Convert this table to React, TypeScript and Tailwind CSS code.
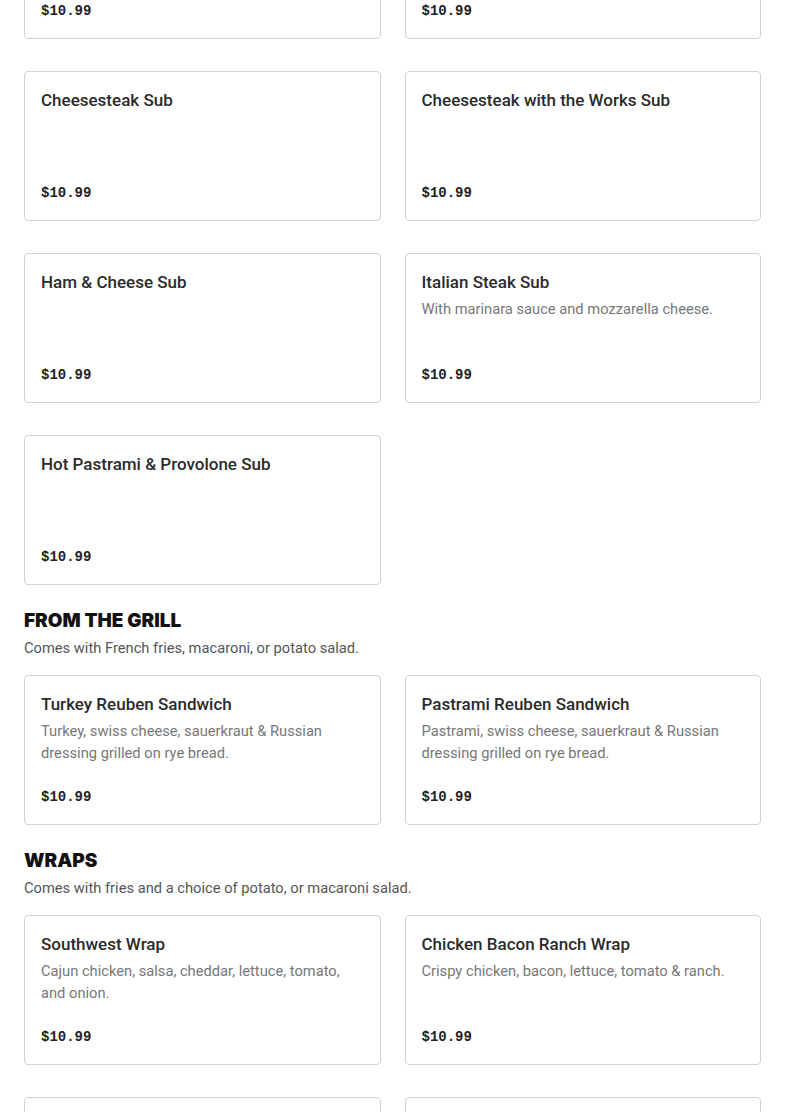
type Item = { name: string; desc?: string; price: string };

const subsTop: Item[] = [
  { name: "Chicken Cheesesteak Sub", price: "$10.99" },
  { name: "Chicken Cheesesteak with the Works Sub", price: "$10.99" },
];

const subs: Item[] = [
  { name: "Cheesesteak Sub", price: "$10.99" },
  { name: "Cheesesteak with the Works Sub", price: "$10.99" },
  { name: "Ham & Cheese Sub", price: "$10.99" },
  { name: "Italian Steak Sub", desc: "With marinara sauce and mozzarella cheese.", price: "$10.99" },
  { name: "Hot Pastrami & Provolone Sub", price: "$10.99" },
];

const grill: Item[] = [
  {
    name: "Turkey Reuben Sandwich",
    desc: "Turkey, swiss cheese, sauerkraut & Russian dressing grilled on rye bread.",
    price: "$10.99",
  },
  {
    name: "Pastrami Reuben Sandwich",
    desc: "Pastrami, swiss cheese, sauerkraut & Russian dressing grilled on rye bread.",
    price: "$10.99",
  },
];

const wraps: Item[] = [
  { name: "Southwest Wrap", desc: "Cajun chicken, salsa, cheddar, lettuce, tomato, and onion.", price: "$10.99" },
  { name: "Chicken Bacon Ranch Wrap", desc: "Crispy chicken, bacon, lettuce, tomato & ranch.", price: "$10.99" },
  { name: "Buffalo Chicken Wrap", desc: "Buffalo chicken, lettuce, tomato & blue cheese.", price: "$10.99" },
  { name: "Turkey Club Wrap", desc: "Turkey, bacon, lettuce, tomato & mayo.", price: "$10.99" },
];

const MenuCard = ({ item }: { item: Item }) => (
  <div className="flex flex-col h-[150px] border border-[#d2d2d2] rounded-[4px] bg-white px-4 pt-4 pb-[17px]">
    <h3 className="text-[17px] leading-6 font-medium text-[#2b2b2b]">{item.name}</h3>
    {item.desc && (
      <p className="mt-1 text-[14.7px] leading-[22px] text-[#777]">{item.desc}</p>
    )}
    <p className="mt-auto text-[14px] leading-5 font-bold text-[#222] font-['Liberation_Mono',monospace]">
      {item.price}
    </p>
  </div>
);

const Grid = ({ items }: { items: Item[] }) => (
  <div className="grid grid-cols-2 gap-x-6 gap-y-8">
    {items.map((it) => (
      <MenuCard key={it.name} item={it} />
    ))}
  </div>
);

const Section = ({ title, note, items }: { title: string; note: string; items: Item[] }) => (
  <section className="mt-6">
    <h2 className="text-[19px] leading-6 font-black text-[#111] font-['Inter',sans-serif]">{title}</h2>
    <p className="mt-1 text-[14.7px] leading-[22px] text-[#555]">{note}</p>
    <div className="mt-4">
      <Grid items={items} />
    </div>
  </section>
);

export default function App() {
  return (
    <div className="min-h-screen bg-white font-['Roboto',sans-serif] overflow-hidden">
      <div className="px-6 -mt-[111px] pb-10">
        <Grid items={subsTop} />
        <div className="mt-8">
          <Grid items={subs} />
        </div>
        <Section title="FROM THE GRILL" note="Comes with French fries, macaroni, or potato salad." items={grill} />
        <Section title="WRAPS" note="Comes with fries and a choice of potato, or macaroni salad." items={wraps} />
      </div>
    </div>
  );
}
